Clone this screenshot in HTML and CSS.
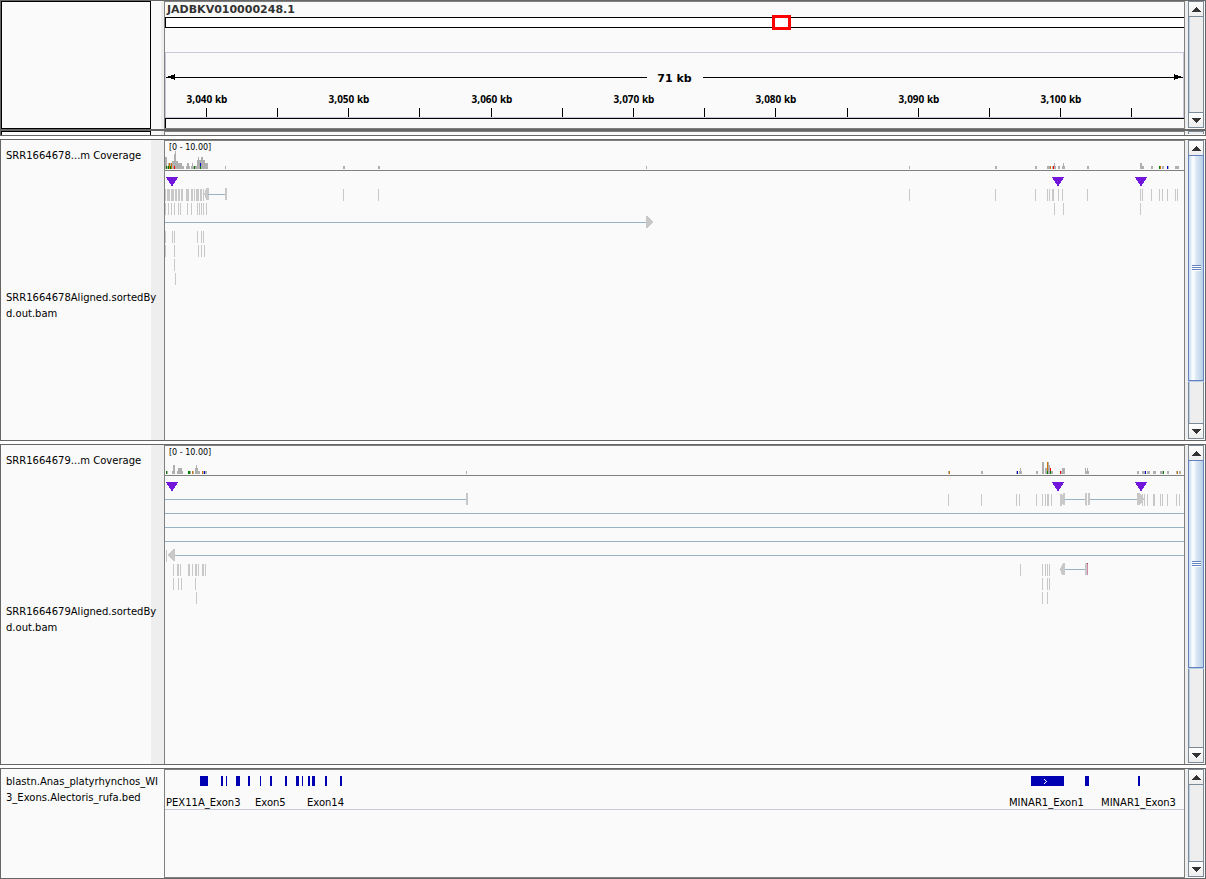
FILE: index.html
```html
<!DOCTYPE html>
<html lang="en">
<head>
<meta charset="utf-8">
<title>Genome browser - JADBKV010000248.1</title>
<link rel="stylesheet" href="styles.css">
</head>
<body>
<main class="browser">
  <section class="panel panel-header" aria-label="Locus and ruler">
    <div class="names attributes"></div>
    <div class="gutter gutter-narrow"></div>
    <div class="data data-closed">
      <svg class="canvas canvas-header" role="img" aria-label="Ideogram and ruler">
        <svg viewBox="165 2 1019 126" width="100%" height="100%" preserveAspectRatio="none" id="header"></svg>
        <text class="locus" x="2" y="11">JADBKV010000248.1</text>
        <text class="span" x="50%" y="80">71 kb</text>
        <g id="ruler-labels"></g>
      </svg>
    </div>
    <div class="scrollbar">
      <button type="button" class="step up" aria-label="Scroll up"><svg viewBox="0 0 9 5"><path d="M4 0h1v1h1v1h1v1h1v1h1v1H0V4h1V3h1V2h1V1h1z"/></svg></button>
      <div class="track"></div>
      <button type="button" class="step down" aria-label="Scroll down"><svg viewBox="0 0 9 5"><path d="M0 0h9v1H8v1H7v1H6v1H5v1H4V4H3V3H2V2H1V1H0z"/></svg></button>
    </div>
  </section>

  <section class="panel panel-strip" aria-hidden="true">
    <div class="names attributes"></div>
    <div class="gutter gutter-narrow"></div>
    <div class="data"></div>
    <div class="scrollbar"></div>
  </section>

  <section class="panel" aria-label="SRR1664678">
    <div class="names">
      <div class="name name-coverage">SRR1664678...m Coverage</div>
      <div class="name name-reads"><span>SRR1664678Aligned.sortedBy<br>d.out.bam</span></div>
    </div>
    <div class="gutter"></div>
    <div class="data">
      <svg class="canvas canvas-first" role="img" aria-label="SRR1664678 coverage and alignments">
        <svg viewBox="165 141 1019 299" width="100%" height="100%" preserveAspectRatio="none" id="first"></svg>
        <text class="range" x="4" y="9">[0 - 10.00]</text>
      </svg>
    </div>
    <div class="scrollbar">
      <button type="button" class="step up" aria-label="Scroll up"><svg viewBox="0 0 9 5"><path d="M4 0h1v1h1v1h1v1h1v1h1v1H0V4h1V3h1V2h1V1h1z"/></svg></button>
      <div class="track"><div class="thumb" style="height:84.7%"><span class="grip"></span></div></div>
      <button type="button" class="step down" aria-label="Scroll down"><svg viewBox="0 0 9 5"><path d="M0 0h9v1H8v1H7v1H6v1H5v1H4V4H3V3H2V2H1V1H0z"/></svg></button>
    </div>
  </section>

  <section class="panel" aria-label="SRR1664679">
    <div class="names">
      <div class="name name-coverage">SRR1664679...m Coverage</div>
      <div class="name name-reads"><span>SRR1664679Aligned.sortedBy<br>d.out.bam</span></div>
    </div>
    <div class="gutter"></div>
    <div class="data">
      <svg class="canvas canvas-second" role="img" aria-label="SRR1664679 coverage and alignments">
        <svg viewBox="165 446 1019 318" width="100%" height="100%" preserveAspectRatio="none" id="second"></svg>
        <text class="range" x="4" y="9">[0 - 10.00]</text>
      </svg>
    </div>
    <div class="scrollbar">
      <button type="button" class="step up" aria-label="Scroll up"><svg viewBox="0 0 9 5"><path d="M4 0h1v1h1v1h1v1h1v1h1v1H0V4h1V3h1V2h1V1h1z"/></svg></button>
      <div class="track"><div class="thumb" style="height:72.7%"><span class="grip"></span></div></div>
      <button type="button" class="step down" aria-label="Scroll down"><svg viewBox="0 0 9 5"><path d="M0 0h9v1H8v1H7v1H6v1H5v1H4V4H3V3H2V2H1V1H0z"/></svg></button>
    </div>
  </section>

  <section class="panel panel-features" aria-label="Features">
    <div class="names">
      <div class="name name-features">blastn.Anas_platyrhynchos_WI<br>3_Exons.Alectoris_rufa.bed</div>
    </div>
    <div class="gutter gutter-plain"></div>
    <div class="data data-closed">
      <svg class="canvas canvas-features" role="img" aria-label="Exon features">
        <svg viewBox="165 770 1019 107" width="100%" height="100%" preserveAspectRatio="none" id="features"></svg>
        <g id="feature-labels"></g>
      </svg>
    </div>
    <div class="scrollbar">
      <button type="button" class="step up" aria-label="Scroll up"><svg viewBox="0 0 9 5"><path d="M4 0h1v1h1v1h1v1h1v1h1v1H0V4h1V3h1V2h1V1h1z"/></svg></button>
      <div class="track"></div>
      <button type="button" class="step down" aria-label="Scroll down"><svg viewBox="0 0 9 5"><path d="M0 0h9v1H8v1H7v1H6v1H5v1H4V4H3V3H2V2H1V1H0z"/></svg></button>
    </div>
  </section>
</main>
<script src="tracks.js"></script>
</body>
</html>
```

FILE: styles.css
```css
* { box-sizing: border-box; }

body {
  margin: 0;
  background: #fff;
  font-family: "DejaVu Sans", sans-serif;
  font-size: 10px;
  color: #000;
}

.browser {
  display: flex;
  flex-direction: column;
  gap: 3px;
  min-height: 100vh;
}

.panel {
  display: grid;
  grid-template-columns: 150px 13px minmax(0, 1fr) 19px;
  padding-right: 1px;
  border: 1px solid #666;
  background: #fafafa;
}

.panel-header {
  border-bottom-width: 2px;
}

.panel-strip {
  height: 5px;
  margin-top: -3px;
  border-top: 0;
}

.panel-features { flex: 1; }

.names {
  display: flex;
  flex-direction: column;
  white-space: nowrap;
  z-index: 1;
}

.attributes { border: 1px solid #000; }
.panel-strip .attributes { border-bottom: 0; }

.name {
  padding-left: 5px;
  line-height: 16px;
}

.name-coverage { padding-top: 8px; height: 31px; }
.name-reads { flex: 1; display: flex; align-items: center; }
.name-features { padding-top: 5px; }

.gutter { background: #eee; }
.gutter-narrow { border-left: 10px solid #fafafa; }
.gutter-plain { background: #fafafa; }

.data {
  border: 1px solid #808080;
  border-bottom: 0;
}

.data-closed { border-bottom: 1px solid #808080; }

.canvas {
  display: block;
  width: 100%;
  shape-rendering: crispEdges;
}

.canvas-header { height: 126px; }
.canvas-first { height: 299px; }
.canvas-second { height: 318px; }
.canvas-features { height: 107px; }

.locus { font-size: 11px; font-weight: bold; fill: #333; }
.span { font-size: 11px; font-weight: bold; text-anchor: middle; }
.range { font-size: 8px; }
.tick-label {
  font-family: "Noto Sans", "Open Sans", sans-serif;
  font-size: 10px;
  font-weight: bold;
  text-anchor: middle;
}
.feature-label { font-size: 10px; }

.scrollbar {
  display: flex;
  flex-direction: column;
  margin-left: 3px;
  margin-bottom: 1px;
  border: 1px solid #7a8a99;
  background: #eee;
  box-shadow: -3px 0 #eee;
}

.panel-strip .scrollbar { border-bottom: 0; }

.step {
  display: grid;
  place-items: center;
  flex: none;
  height: 15px;
  padding: 0;
  border: 0;
  background: linear-gradient(#fff, #eee);
}

.step svg { width: 9px; height: 5px; fill: #333; shape-rendering: crispEdges; }
.step.up { border-bottom: 1px solid #7a8a99; }
.step.down { border-top: 1px solid #7a8a99; }

.track {
  flex: 1;
  border-left: 1px solid #b8cfe5;
}

.thumb {
  display: grid;
  place-items: center;
  margin: -1px -1px 0 -2px;
  border: 1px solid #6382bf;
  background: linear-gradient(90deg, #c8ddf0 0, #fff 30%, #dce9f5 50%, #b8cfe5 100%);
  box-shadow: 0 1px #b8cfe5;
}

.grip {
  width: 9px;
  height: 6px;
  background: repeating-linear-gradient(#6382bf 0 1px, #fff 1px 2px);
}
```

FILE: tracks.js
```javascript
const NS = "http://www.w3.org/2000/svg";
const START = 165;
const WIDTH = 1019;
const READ = "#c8c8c8";
const INTRON = "#98b3c5";
const COVER = "#afafaf";
const COLORS = { g: "#008000", o: "#d17105", r: "#ff0000", b: "#0000d0", n: COVER };

function add(parent, tag, attrs, text) {
  const el = document.createElementNS(NS, tag);
  for (const key in attrs) el.setAttribute(key, attrs[key]);
  if (text) el.textContent = text;
  parent.appendChild(el);
  return el;
}

function box(parent, x, y, w, h, fill) {
  add(parent, "rect", { x, y, width: w, height: h, fill });
}

function shape(parent, d, fill) {
  add(parent, "path", { d, fill });
}

// Each entry is "x" or "x:width".
function reads(parent, y, list, fill = READ, h = 12) {
  list.split(" ").forEach(item => {
    const [x, w] = item.split(":").map(Number);
    box(parent, x, y, w || 1, h, fill);
  });
}

// Each entry is "x:width:height", optionally followed by a colour key and a lift from the baseline.
function coverage(parent, base, list) {
  list.split(" ").forEach(item => {
    const [x, w, h, key, lift] = item.split(":");
    box(parent, +x, base - h - (lift || 0), +w, +h, COLORS[key || "n"]);
  });
}

function insertion(parent, x, y) {
  let d = "";
  [12, 10, 10, 8, 6, 6, 4, 2, 2].forEach((w, i) => {
    d += `M${x + 6 - w / 2} ${y + i}h${w}v1h-${w}z`;
  });
  shape(parent, d, "#7316dc");
}

function label(parent, x, y, text, className) {
  add(parent, "text", { x: ((x - START) / WIDTH * 100).toFixed(3) + "%", y, class: className }, text);
}

// Ideogram and ruler
const header = document.getElementById("header");
box(header, 165, 17, 1019, 11, "#000");
box(header, 166, 18, 1018, 9, "#fff");
box(header, 772, 15, 19, 15, "#f00");
box(header, 775, 18, 13, 9, "#fff");
box(header, 165, 52, 1019, 66, "#c8c8d8");
box(header, 166, 53, 1017, 64, "#fafafa");
box(header, 165, 118, 1019, 1, "#000");
box(header, 165, 118, 1, 10, "#000");
box(header, 166, 77, 481, 1, "#000");
box(header, 703, 77, 480, 1, "#000");
shape(header, "M166 77h2v-1h3v-1h3v-1h1v6h-1v-1h-3v-1h-5z", "#000");
shape(header, "M1183 77h-2v-1h-3v-1h-3v-1h-1v6h1v-1h3v-1h5z", "#000");

const rulerLabels = document.getElementById("ruler-labels");
[206, 277, 348, 419, 491, 562, 633, 704, 775, 847, 918, 989, 1060, 1131].forEach((x, i) => {
  box(header, x, 108, 1, 9, "#000");
  if (i % 2 === 0) label(rulerLabels, x + 1, 101, `3,${String(40 + i * 5).padStart(3, "0")} kb`, "tick-label");
});

// First alignment panel
const first = document.getElementById("first");
box(first, 165, 170, 1019, 1, "#808080");
coverage(first, 169,
  "165:2:12 167:1:3 168:4:6 172:2:8 174:1:15 175:1:18 176:2:8 178:4:6 182:2:3 186:4:3 187:2:6 191:2:3 192:1:6 193:4:3 " +
  "197:1:9 198:1:12 199:2:9 201:2:12 203:2:9 205:3:6 166:1:3:g 168:1:3:g 169:1:6:o 170:1:3:g 171:1:6:o 174:1:3:r 194:1:3:g 200:1:6:b 200:1:3:g " +
  "225:1:3 343:2:3 378:2:3 646:1:3 909:1:3 995:2:3 1035:2:3 1047:3:3 1050:1:3:o 1052:1:3 1053:1:3:r 1054:1:6 1055:1:3 1058:2:3 " +
  "1062:3:3 1063:1:6 1087:2:3 1140:2:6 1142:2:3 1151:2:3 1159:1:3:g 1160:1:3:o 1162:2:3 1167:1:3:b 1168:1:3 1175:4:3");
[166, 1052, 1135].forEach(x => insertion(first, x, 177));
reads(first, 189, "165 167:3 171:3 175:2 178:2 181:2 186:3 191:2 194 196:3 200:2 203 343 378 909 995 1035 1047 1049 1052:2 1058 1062 1087 1140 1142 1151 1159 1162 1167 1175 1177");
shape(first, "M204 194l2-5v-1h3v12h-3v-1z", READ);
box(first, 208, 194, 17, 1, INTRON);
box(first, 225, 188, 2, 12, READ);
reads(first, 203, "165 168 171 174 178 180 187 191 197 199 201 203 206 1054 1063 1140");
box(first, 165, 222, 481, 1, INTRON);
shape(first, "M646 216h2l5 6l-5 6h-2z", READ);
reads(first, 231, "165 172 174 197 201 203");
reads(first, 245, "165 174 198 201 204");
reads(first, 259, "174");
reads(first, 273, "175");

// Second alignment panel
const second = document.getElementById("second");
box(second, 165, 475, 1019, 1, "#808080");
coverage(second, 474,
  "166:1:3:g 167:1:3 172:3:3 173:2:9 177:6:3 178:2:6 180:2:6 188:2:3:g 190:1:3 192:1:3:o 193:1:3 195:5:3 195:3:6 196:1:9 " +
  "202:1:3:o 203:1:3 204:1:3:b 205:2:3 466:1:3 948:1:3 949:1:3:o 981:2:3 1016:1:3 1017:1:3:b 1019:3:3 1020:1:6 1036:2:3 " +
  "1042:2:12 1045:2:6 1047:1:12:o 1047:1:3:g 1048:1:12 1049:1:9 1050:1:6:r 1050:1:3:g 1051:2:3 1060:1:3:r 1061:1:3 1062:3:6 " +
  "1085:4:3 1085:1:6 1087:1:6 1137:2:3 1142:3:3 1145:1:3:b 1147:3:3 1153:3:3 1160:3:3 1163:1:3:g 1167:2:3 1176:1:3 1177:1:3:o 1179:2:3");
[166, 1052, 1135].forEach(x => insertion(second, x, 482));
[[165, 301, 499], [1065, 20, 499], [1090, 47, 499], [165, 1019, 513], [165, 1019, 527], [165, 1019, 541], [175, 1009, 555], [1065, 20, 569]]
  .forEach(([x, w, y]) => box(second, x, y, w, 1, INTRON));
reads(second, 493, "466:2 1063:2 1085:2 1088:2");
reads(second, 494, "948 981 1016 1019 1036 1042 1045 1047:2 1051 1060:2 1086 1142 1144 1147 1153:2 1160 1162 1167 1176 1179");
shape(second, "M1060 499l2-4h2v9h-2z", READ);
shape(second, "M1137 493h3l4 6l-4 6h-3z", READ);
reads(second, 550, "166");
shape(second, "M168 555l5-6h2v12h-2z", READ);
reads(second, 564, "173 177:2 180 188:2 192 195:2 198 202:2 205 1020 1042 1045 1047 1049");
shape(second, "M1060 569l3-6h2v12h-3z", READ);
reads(second, 563, "1085:2");
box(second, 1087, 563, 1, 12, "#d08aa8");
box(second, 1087, 563, 1, 1, "#b0305a");
reads(second, 578, "173 178 181 195 1042 1047 1049");
reads(second, 592, "196 1042 1047");

// Feature panel
const features = document.getElementById("features");
reads(features, 776, "200:8 221:2 226 236:4 248:2 260 270:2 285:2 296:3 302 308:2 312:3 325:2 340:2 1031:33 1085:4 1138:2", "#0000b2", 10);
shape(features, "M1044 779h1v1h1v1h1v1h-1v1h-1v1h-1v-1h1v-1h1v-1h-1v-1h-1z", "#fff");
box(features, 165, 809, 1019, 1, "#c8c8d8");
const featureLabels = document.getElementById("feature-labels");
[[166, "PEX11A_Exon3"], [255, "Exon5"], [307, "Exon14"], [1009, "MINAR1_Exon1"], [1101, "MINAR1_Exon3"]]
  .forEach(([x, text]) => label(featureLabels, x, 36, text, "feature-label"));
```
